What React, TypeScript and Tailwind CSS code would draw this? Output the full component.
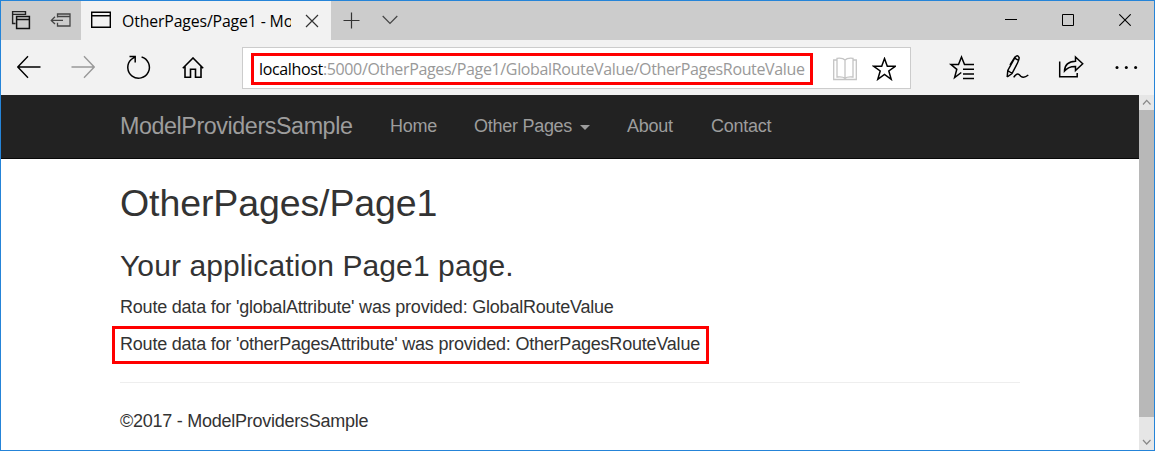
import type { ReactNode } from "react";

type IconProps = {
  box: string;
  className: string;
  children: ReactNode;
};

function Icon({ box, className, children }: IconProps) {
  return (
    <svg
      viewBox={box}
      className={`shrink-0 ${className}`}
      fill="none"
      stroke="#000"
      strokeWidth="1.4"
    >
      {children}
    </svg>
  );
}

function TabStrip() {
  return (
    <div className="flex h-[39px] bg-[#cccccc]">
      <div className="flex w-20 shrink-0">
        <Icon box="0 0 20 20" className="ml-[10px] mt-[9px] size-5">
          <path d="M4.5 13.5H1.6V1.6H14.5V5M1.6 4.4H14.5" stroke="#222" />
          <path d="M5.6 6.6H18.4V18.4H5.6ZM5.6 9.4H18.4" stroke="#111" strokeWidth="1.5" />
        </Icon>
        <Icon box="0 0 22 16" className="ml-[19px] mt-[11px] h-4 w-[22px]">
          <path
            d="M7.5 5.5V2H20V14H7.5V10.7M7.5 4.5H20M1.3 8.4H13M5 4.8L1.3 8.4L5 12"
            stroke="#444"
            strokeWidth="1.3"
          />
        </Icon>
      </div>
      <div className="flex w-[250px] shrink-0 bg-[#f2f2f2]">
        <Icon box="0 0 20 18" className="ml-[10px] mt-[10px] h-[18px] w-5">
          <path d="M.7 1.2H19.3V16.3H.7ZM.7 4.8H19.3" />
        </Icon>
        <div className="ml-[11px] mt-2 h-6 w-[169px] overflow-hidden whitespace-nowrap font-['Open_Sans',sans-serif] text-[15.8px] leading-6 tracking-[-0.13px] text-black">
          OtherPages/Page1 - Mo
        </div>
        <Icon box="0 0 14 14" className="ml-[14px] mt-[13px] size-[14px]">
          <path d="M1 1L13 13M13 1L1 13" stroke="#333" strokeWidth="1.2" />
        </Icon>
      </div>
      <Icon box="0 0 17 17" className="ml-3 mt-[11px] size-[17px]">
        <path d="M.5 8.5H16.5M8.5 .5V16.5" stroke="#333" strokeWidth="1.2" />
      </Icon>
      <Icon box="0 0 16 10" className="ml-[22px] mt-[14px] h-[10px] w-4">
        <path d="M.7 1L8 8.5L15.3 1" stroke="#444" strokeWidth="1.2" />
      </Icon>
      <div className="ml-auto mr-[23px] mt-[13px] flex h-3 gap-[45px]">
        <Icon box="0 0 12 12" className="size-3">
          <path d="M0 5.5H12" strokeWidth="1" />
        </Icon>
        <Icon box="0 0 12 12" className="size-3">
          <path d="M.5 .5H11.5V11.5H.5Z" strokeWidth="1" />
        </Icon>
        <Icon box="0 0 12 12" className="size-3">
          <path d="M.3 .3L11.7 11.7M11.7 .3L.3 11.7" strokeWidth="1.1" />
        </Icon>
      </div>
    </div>
  );
}

function Toolbar() {
  return (
    <div className="flex h-[55px] bg-[#f2f2f2]">
      <Icon box="0 0 24 24" className="ml-4 mt-[15px] size-6">
        <path d="M23.5 12H.8M11 1.3L.8 12L11 22.7" />
      </Icon>
      <Icon box="0 0 24 24" className="ml-[30px] mt-[15px] size-6">
        <path d="M.5 12H23.2M13 1.3L23.2 12L13 22.7" stroke="#999" />
      </Icon>
      <Icon box="0 0 24 24" className="ml-8 mt-[15px] size-6">
        <path
          d="M14.6 2A10.8 10.8 0 1 1 4.2 4.5L8 1.8M2.5 1.6H8.2V7.4"
          strokeWidth="1.5"
        />
      </Icon>
      <Icon box="0 0 22 22" className="ml-[31px] mt-[17px] size-[22px]">
        <path
          d="M.8 11.2L11 1L21.2 11.2M3 9.5V20.2H8.5V12.2H13.5V20.2H19V9.5"
          strokeWidth="1.6"
        />
      </Icon>
      <div className="ml-[38px] mt-[7px] flex h-[42px] w-[669px] shrink-0 border border-[#cccccc] bg-white">
        <div className="ml-2 mt-[5px] h-8 w-[562px] shrink-0 border-3 border-[#ff0000] pl-[5px]">
          <div className="whitespace-nowrap font-['Open_Sans',sans-serif] text-[16px] leading-[27px] tracking-[-0.35px] text-[#999999]">
            <span className="text-black">localhost</span>
            :5000/OtherPages/Page1/GlobalRouteValue/OtherPagesRouteValue
          </div>
        </div>
        <Icon box="0 0 24 24" className="ml-5 mt-[9px] size-6">
          <path
            d="M12 3V21.5M12 3C10 .8 7 1 4 1.3V20C7 19.6 10 19.6 12 21.3C14 19.6 17 19.6 20 20V1.3C17 1 14 .8 12 3M4 3H.7V22.5H23.3V3H20"
            stroke="#c4c4c4"
            strokeWidth="1.3"
          />
        </Icon>
        <Icon box="0 0 24 24" className="ml-[15px] mt-[9px] size-6">
          <path
            d="M12.5 1.6L15.3 9.3H23.2L16.8 14L19.2 22.3L12.5 17.4L5.8 22.3L8.2 14L1.8 9.3H9.7Z"
            strokeWidth="1.5"
          />
        </Icon>
      </div>
      <Icon box="0 0 26 26" className="ml-[37px] mt-[15px] size-[26px]">
        <path
          d="M26 9.5H16.5L13.5 2L10.5 9.5H3L8.8 14.3L6.6 22.5L13.3 17.5M15 14.3H26M15 19H26M15 23.5H26"
          strokeWidth="1.5"
        />
      </Icon>
      <Icon box="0 0 24 26" className="ml-8 mt-[14px] h-[26px] w-6">
        <path
          d="M1.2 23L1.8 16.5L9.2 3.2Q11.6 -.2 13.2 3.8Q13 6 11.5 9L6 19.5L1.2 23M1.8 16.5L6 19.5M8.7 4.2L12.9 6.6M4 11L9.2 2.7M7.7 23.3C11.2 18 13 20 14.8 22.2C17.5 24.5 19.5 23.3 22.3 21"
          strokeWidth="1.5"
        />
      </Icon>
      <Icon box="0 0 26 24" className="ml-7 mt-[15px] h-6 w-[26px]">
        <path
          d="M1.7 6.5V21.7H19.2V18M17.5 2L24.7 8.8L17.5 15.5V11.5C12 11.3 9.5 12.5 6.5 16C6.7 10 10.5 6.4 17.5 6.2Z"
          strokeWidth="1.5"
        />
      </Icon>
      <Icon box="0 0 24 4" className="ml-[31px] mt-[25px] h-1 w-6">
        <g fill="#000" stroke="none">
          <circle cx="2" cy="2.4" r="1.5" />
          <circle cx="11.3" cy="2.4" r="1.5" />
          <circle cx="20.6" cy="2.4" r="1.5" />
        </g>
      </Icon>
    </div>
  );
}

function Navbar() {
  return (
    <nav className="flex h-16 items-center whitespace-nowrap border-b border-[#080808] bg-[#222222] pl-[119px] text-[18px] leading-[25px] tracking-[-0.27px] text-[#9d9d9d]">
      <span className="w-[270px] text-[23.3px] tracking-[-0.42px]">ModelProvidersSample</span>
      <span className="w-[84px]">Home</span>
      <span className="flex w-[153px] items-center">
        Other Pages
        <svg viewBox="0 0 10 5" className="ml-[8px] mt-[2px] h-[5px] w-[10px]" fill="#9d9d9d">
          <path d="M0 0H10L5 5Z" />
        </svg>
      </span>
      <span className="w-[84px]">About</span>
      <span>Contact</span>
    </nav>
  );
}

function PageBody() {
  return (
    <main className="flex flex-col items-start whitespace-nowrap pl-[119px] pt-6 text-[18px] leading-[25px] tracking-[-0.21px] text-[#333333]">
      <h2 className="text-[37.5px] leading-[41px] tracking-[-0.1px]">OtherPages/Page1</h2>
      <h3 className="mt-[25px] text-[30px] leading-[33px] tracking-[0.1px]">
        Your application Page1 page.
      </h3>
      <p className="mt-[13px]">Route data for 'globalAttribute' was provided: GlobalRouteValue</p>
      <div className="-ml-2 mt-[6px] h-[38px] w-[597px] border-3 border-[#ff0000] pl-[5px] pt-[3px]">
        Route data for 'otherPagesAttribute' was provided: OtherPagesRouteValue
      </div>
      <hr className="mt-[18px] w-[900px] border-[#eeeeee]" />
      <footer className="mt-[26px] tracking-[-0.25px]">©2017 - ModelProvidersSample</footer>
    </main>
  );
}

function Scrollbar() {
  return (
    <div className="flex w-[15px] shrink-0 flex-col bg-[#e6e6e6]">
      <Icon box="0 0 15 15" className="size-[15px]">
        <path d="M4 9.5L7.7 5.3L11.5 9.5" stroke="#888" strokeWidth="1.2" />
      </Icon>
      <div className="h-[307px] bg-[#b8b8b8]" />
      <Icon box="0 0 15 15" className="mt-auto size-[15px]">
        <path d="M4 5L7.7 9L11.5 5" stroke="#888" strokeWidth="1.2" />
      </Icon>
    </div>
  );
}

export default function App() {
  return (
    <div className="flex h-[451px] w-[1155px] flex-col overflow-hidden border border-[#2584d8] bg-white font-['Liberation_Sans',Arial,sans-serif]">
      <TabStrip />
      <Toolbar />
      <div className="flex min-h-0 flex-1">
        <div className="min-w-0 flex-1">
          <Navbar />
          <PageBody />
        </div>
        <Scrollbar />
      </div>
    </div>
  );
}
